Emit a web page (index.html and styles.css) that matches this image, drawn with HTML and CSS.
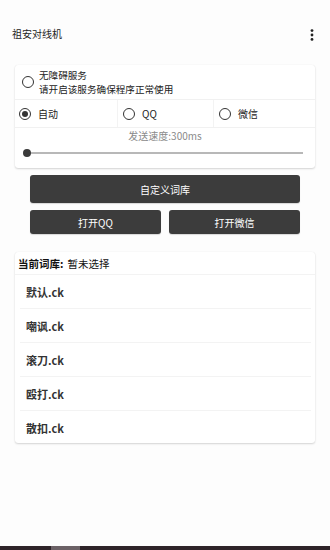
FILE: index.html
```html
<!DOCTYPE html>
<html lang="zh">
<head>
<meta charset="utf-8">
<link rel="stylesheet" href="styles.css">
</head>
<body>
<div class="page">
  <header class="appbar">
    <span class="title">祖安对线机</span>
    <svg class="more" width="4" height="12" viewBox="0 0 4 12"><circle cx="2" cy="1.6" r="1.4"/><circle cx="2" cy="6" r="1.4"/><circle cx="2" cy="10.4" r="1.4"/></svg>
  </header>

  <section class="card settings">
    <div class="service">
      <span class="radio"></span>
      <div class="service-text">
        <div>无障碍服务</div>
        <div>请开启该服务确保程序正常使用</div>
      </div>
    </div>
    <div class="modes">
      <label class="mode"><span class="radio checked"></span>自动</label>
      <label class="mode"><span class="radio"></span>QQ</label>
      <label class="mode"><span class="radio"></span>微信</label>
    </div>
    <div class="speed">
      <div class="speed-label">发送速度:300ms</div>
      <div class="slider"><span class="thumb"></span></div>
    </div>
  </section>

  <div class="actions">
    <button class="btn wide">自定义词库</button>
    <div class="btn-row">
      <button class="btn">打开QQ</button>
      <button class="btn">打开微信</button>
    </div>
  </div>

  <section class="card lib">
    <div class="lib-head"><b>当前词库:</b><span>暂未选择</span></div>
    <div class="item">默认.ck</div>
    <div class="item">嘲讽.ck</div>
    <div class="item">滚刀.ck</div>
    <div class="item">殴打.ck</div>
    <div class="item">散扣.ck</div>
  </section>

  <div class="navbar"><span class="nav-seg"></span></div>
</div>
</body>
</html>
```

FILE: styles.css
```css
* { box-sizing: border-box; }
html, body { margin: 0; padding: 0; }
body {
  background: #fdfdfd;
  font-family: "Noto Sans CJK SC", "Noto Sans", "Liberation Sans", sans-serif;
  color: #222;
}
.page {
  width: 330px;
  height: 550px;
  display: flex;
  flex-direction: column;
  overflow: hidden;
}
.appbar {
  height: 65px;
  padding: 26px 16px 0 12px;
  display: flex;
  align-items: flex-start;
  justify-content: space-between;
}
.title { font-size: 10px; line-height: 16px; color: #222; }
.more { fill: #222; margin-top: 3px; }

.card {
  margin: 0 15px;
  background: #fff;
  border-radius: 3px;
  box-shadow: 0 1px 2px rgba(0,0,0,0.16), 0 0 1px rgba(0,0,0,0.08);
}
.settings { height: 103px; display: flex; flex-direction: column; }

.radio {
  width: 12px;
  height: 12px;
  border: 1.3px solid #333;
  border-radius: 50%;
  flex: none;
  display: inline-flex;
  align-items: center;
  justify-content: center;
}
.radio.checked::after {
  content: "";
  width: 6px;
  height: 6px;
  border-radius: 50%;
  background: #333;
}

.service {
  height: 35px;
  display: flex;
  align-items: center;
  padding-left: 7px;
  gap: 5px;
  border-bottom: 1px solid #f1f1f1;
}
.service-text { font-size: 9.6px; line-height: 14px; color: #222; margin-top: -1px; }

.modes {
  height: 28px;
  display: grid;
  grid-template-columns: 102px 96px 102px;
  border-bottom: 1px solid #f1f1f1;
}
.mode {
  display: flex;
  align-items: center;
  gap: 7px;
  padding-left: 4px;
  font-size: 10px;
  color: #222;
}
.mode + .mode { border-left: 1px solid #f3f3f3; padding-left: 5px; }

.speed { flex: 1; display: flex; flex-direction: column; align-items: stretch; }
.speed-label {
  text-align: center;
  font-size: 10px;
  line-height: 14px;
  color: #8a8a8a;
  margin-top: 1px;
}
.slider {
  position: relative;
  height: 1.5px;
  background: #b8b8b8;
  margin: 9px 12px 0 12px;
}
.thumb {
  position: absolute;
  left: -4px;
  top: -3.5px;
  width: 8px;
  height: 8px;
  border-radius: 50%;
  background: #3a3a3a;
}

.actions {
  margin: 7px 30px 0;
  display: flex;
  flex-direction: column;
  gap: 7px;
}
.btn {
  border: none;
  background: #3c3c3c;
  color: #fff;
  font-family: inherit;
  font-size: 10px;
  border-radius: 3px;
  height: 24px;
  padding: 0;
  box-shadow: 0 1px 1px rgba(0,0,0,0.15);
}
.btn.wide { height: 28px; }
.btn-row { display: grid; grid-template-columns: 1fr 1fr; gap: 8px; }

.lib { margin-top: 18px; height: 191px; }
.lib-head {
  height: 23px;
  padding-left: 3px;
  display: flex;
  align-items: center;
  font-size: 10.5px;
  color: #111;
  border-bottom: 1px solid #f3f3f3;
}
.lib-head b { font-weight: 700; margin-right: 4px; }
.item {
  height: 34px;
  margin: 0 4px 0 5px;
  padding-left: 6px;
  display: flex;
  align-items: center;
  font-size: 11px;
  font-weight: 700;
  color: #333;
  border-bottom: 1px solid #f3f3f3;
}
.item:last-child { border-bottom: none; height: 33px; }

.navbar {
  margin-top: auto;
  height: 4px;
  background: #2e2429;
  position: relative;
}
.nav-seg {
  position: absolute;
  left: 51px;
  top: 0;
  width: 29px;
  height: 4px;
  background: #6b6166;
}
```
